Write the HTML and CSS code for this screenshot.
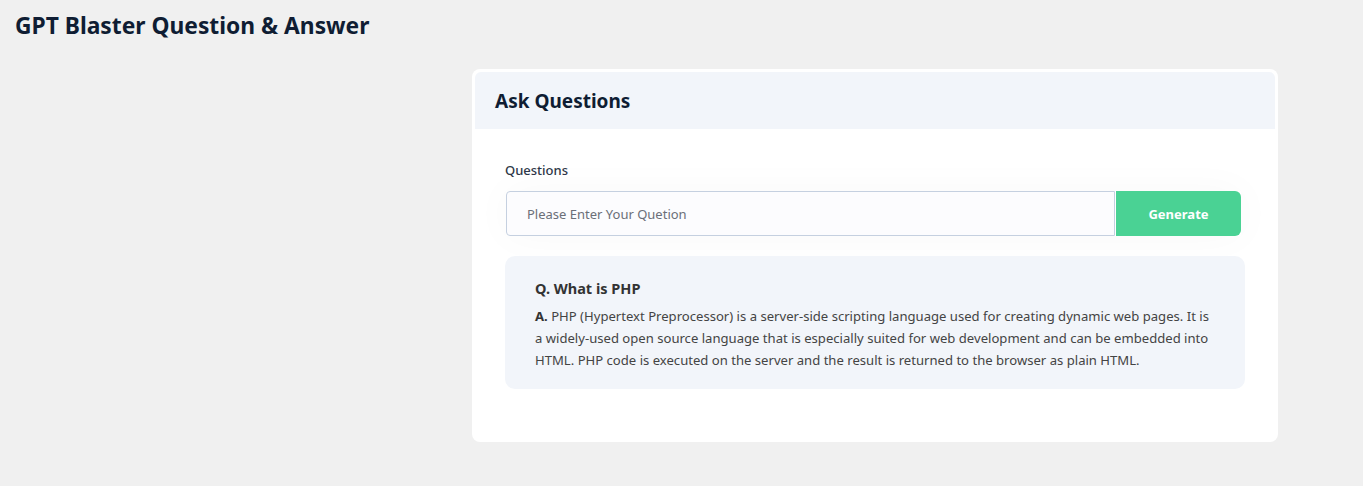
FILE: index.html
```html
<!DOCTYPE html>
<html>
<head>
<meta charset="utf-8">
<link rel="stylesheet" href="styles.css">
</head>
<body>
<h1 class="page-title">GPT Blaster Question &amp; Answer</h1>
<div class="card">
  <div class="card-header">Ask Questions</div>
  <div class="card-body">
    <label class="field-label">Questions</label>
    <div class="input-group">
      <input class="q-input" type="text" placeholder="Please Enter Your Quetion">
      <button class="gen-btn">Generate</button>
    </div>
    <div class="answer">
      <div class="answer-q">Q. What is PHP</div>
      <p class="answer-a"><b>A.</b> PHP (Hypertext Preprocessor) is a server-side scripting language used for creating dynamic web pages. It is a widely-used open source language that is especially suited for web development and can be embedded into HTML. PHP code is executed on the server and the result is returned to the browser as plain HTML.</p>
    </div>
  </div>
</div>
</body>
</html>
```
FILE: styles.css
```css
* { box-sizing: border-box; }
html, body { margin: 0; padding: 0; }
body {
  background: #f0f0f0;
  font-family: "Noto Sans", "Open Sans", sans-serif;
  color: #333;
  height: 486px;
  overflow: hidden;
}
.page-title {
  margin: 0;
  padding: 10px 15px 0;
  height: 69px;
  font-size: 22.8px;
  font-weight: 700;
  color: #0f1d33;
  line-height: 32px;
}
.card {
  margin-left: 472px;
  width: 806px;
  background: #fff;
  border-radius: 8px;
  padding: 3px;
}
.card-header {
  background: #f2f5fa;
  border-radius: 6px 6px 0 0;
  height: 57px;
  padding-left: 20px;
  display: flex;
  align-items: center;
  font-size: 19px;
  font-weight: 700;
  color: #0f1d33;
}
.card-body {
  padding: 32px 30px 50px 30px;
}
.field-label {
  display: block;
  font-size: 13px;
  font-weight: 500;
  color: #2d3748;
  line-height: 18px;
  margin-bottom: 12px;
}
.input-group {
  display: flex;
  margin: 0 4px 20px 1px;
  height: 45px;
  box-shadow: 0 0 40px rgba(0,0,0,0.03);
}
.q-input {
  flex: 1;
  height: 45px;
  border: 1px solid #c5d0e0;
  border-radius: 4px 0 0 4px;
  background: #fcfcfe;
  padding: 0 20px;
  font-family: inherit;
  font-size: 13px;
  color: #333;
  outline: none;
}
.q-input::placeholder { color: #6b6f78; }
.gen-btn {
  width: 125px;
  margin-left: 1px;
  border: none;
  background: #4ad294;
  color: #fff;
  font-family: inherit;
  font-weight: 700;
  font-size: 13px;
  border-radius: 0 6px 6px 0;
}
.answer {
  background: #f2f5fa;
  border-radius: 10px;
  padding: 21px 32px 18px 30px;
}
.answer-q {
  font-size: 14.5px;
  font-weight: 700;
  color: #333;
  line-height: 22px;
  margin-bottom: 6px;
}
.answer-a {
  margin: 0;
  font-size: 13.1px;
  line-height: 22px;
  color: #444;
}
.answer-a b { color: #333; }
```
